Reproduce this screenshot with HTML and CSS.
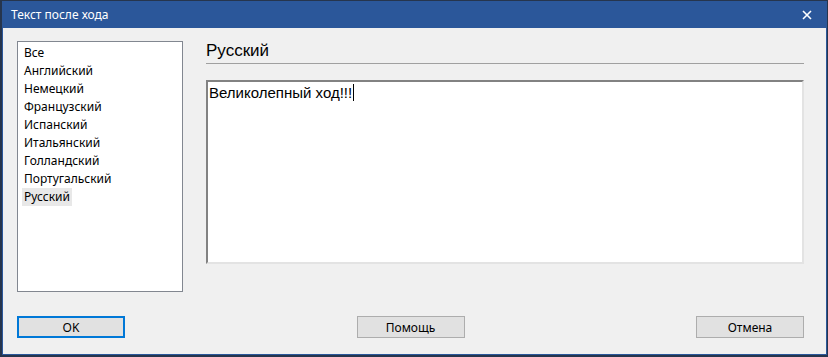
FILE: index.html
```html
<!DOCTYPE html>
<html lang="ru">
<head>
  <meta charset="UTF-8" />
  <title>Текст после хода</title>
  <link rel="stylesheet" href="styles.css">
</head>
<body>
  <div class="dialog">
    <div class="titlebar">
      <span class="title">Текст после хода</span>
      <span class="close">
        <svg width="10" height="10" viewBox="0 0 10 10"><path d="M1 1 L9 9 M9 1 L1 9" stroke="#fff" stroke-width="1.6"/></svg>
      </span>
    </div>
    <div class="content">
      <ul class="listbox">
        <li>Все</li>
        <li>Английский</li>
        <li>Немецкий</li>
        <li>Французский</li>
        <li>Испанский</li>
        <li>Итальянский</li>
        <li>Голландский</li>
        <li>Португальский</li>
        <li class="selected">Русский</li>
      </ul>
      <div class="panel">
        <div class="heading">Русский</div>
        <div class="editor">Великолепный ход!!!<span class="caret"></span></div>
      </div>
    </div>
    <div class="buttons">
      <button class="default">OK</button>
      <button>Помощь</button>
      <button>Отмена</button>
    </div>
  </div>
</body>
</html>
```

FILE: styles.css
```css
body {
  margin: 0;
  background-color: #26354d;
  font-family: 'Noto Sans', sans-serif;
  color: #000;
  height: 357px;
  overflow: hidden;
}
.dialog {
  margin: 1px 0 0 2px;
  width: 823px;
  height: 352px;
  border: 1px solid #2b579a;
  background-color: #f0f0f0;
  box-sizing: content-box;
}
.titlebar {
  height: 26px;
  background-color: #2b579a;
  color: white;
  display: flex;
  align-items: center;
  justify-content: space-between;
  padding: 0 14px 1px 8px;
  box-sizing: border-box;
}
.title {
  font-size: 12px;
}
.close {
  display: flex;
}
.content {
  display: grid;
  grid-template-columns: 166px 1fr;
  column-gap: 23px;
  padding: 13px 22px 0 14px;
}
.listbox {
  list-style: none;
  margin: 0;
  padding: 2px 0 0 4px;
  height: 251px;
  box-sizing: border-box;
  background-color: #fff;
  border: 1px solid #828790;
  font-size: 12px;
}
.listbox li {
  height: 18px;
  line-height: 18px;
  padding: 0 2px;
  width: fit-content;
}
.listbox li.selected {
  background-color: #e8e8e8;
}
.panel {
  display: flex;
  flex-direction: column;
}
.heading {
  font-family: 'Liberation Sans', sans-serif;
  font-size: 17px;
  padding: 0 0 2px 0;
  border-bottom: 1px solid #a0a0a0;
}
.editor {
  margin-top: 16px;
  height: 184px;
  box-sizing: border-box;
  background-color: #fff;
  border: 2px solid;
  border-color: #828282 #e3e3e3 #e3e3e3 #828282;
  font-family: 'Liberation Sans', sans-serif;
  font-size: 15px;
  padding: 2px 1px;
}
.caret {
  display: inline-block;
  width: 1px;
  height: 17px;
  background: #000;
  vertical-align: -3px;
  margin-left: 1px;
}
.buttons {
  display: flex;
  justify-content: space-between;
  padding: 0 22px 0 14px;
  margin-top: 24px;
}
.buttons button {
  width: 108px;
  height: 22px;
  background-color: #e1e1e1;
  border: 1px solid #adadad;
  font-family: 'Noto Sans', sans-serif;
  font-size: 12px;
  color: #000;
  padding: 0;
}
.buttons button.default {
  border: 2px solid #0078d7;
}
```
